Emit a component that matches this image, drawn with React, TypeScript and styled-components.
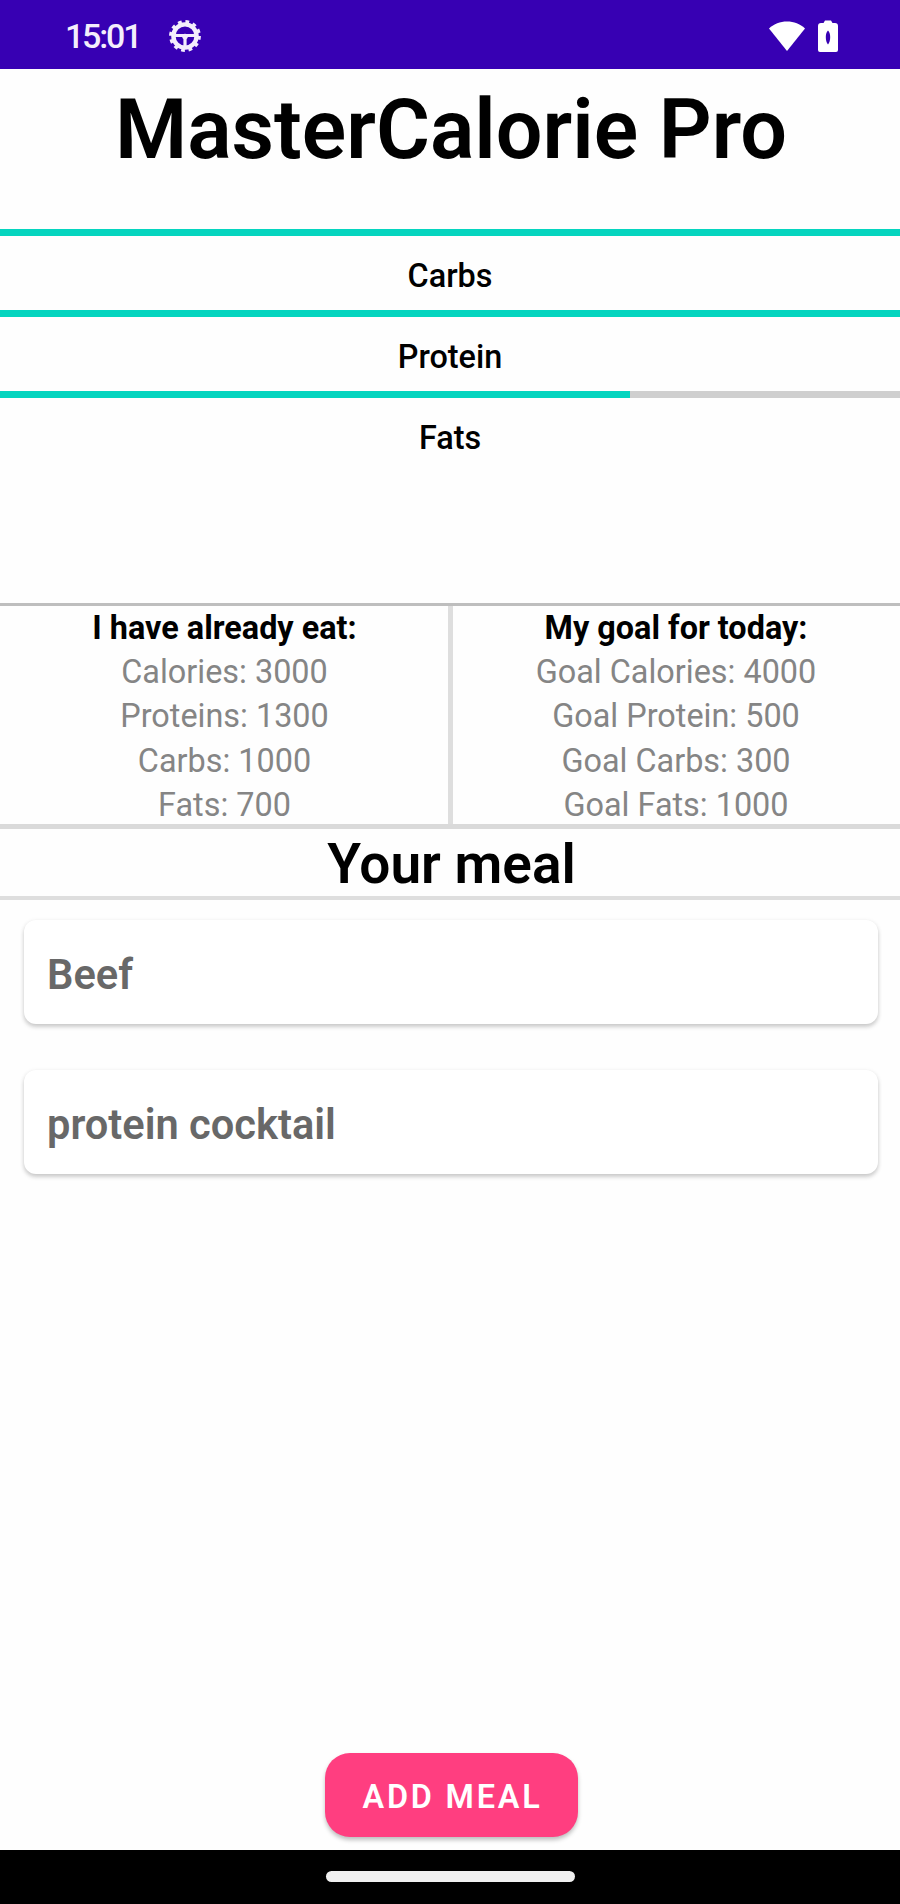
import React from 'react';
import styled, { createGlobalStyle } from 'styled-components';

const GlobalStyle = createGlobalStyle`
  *, *::before, *::after { box-sizing: border-box; }
  body { margin: 0; background: #fff; font-family: Roboto, sans-serif; color: #000; }
`;

const Screen = styled.div`
  display: flex;
  flex-direction: column;
  width: 900px;
  height: 1904px;
  overflow: hidden;
  background: #fefefe;
`;

const StatusBar = styled.header`
  flex: none;
  display: flex;
  align-items: center;
  justify-content: space-between;
  height: 69px;
  padding: 3px 62px 0 65px;
  background: #3700b3;
  color: #fff;
`;

const StatusGroup = styled.div<{ $gap: number }>`
  display: flex;
  align-items: center;
  gap: ${(p) => p.$gap}px;
`;

const Clock = styled.time`
  font-size: 34px;
  line-height: 40px;
  font-weight: 500;
  letter-spacing: -2.2px;
  color: #f4eefc;
`;

const Title = styled.h1`
  flex: none;
  margin: 0;
  padding: 12px 0 0 2px;
  height: 159px;
  font-size: 82.6px;
  line-height: 97px;
  font-weight: 600;
  text-align: center;
`;

const Macros = styled.section`
  flex: none;
  height: 375px;
  padding-top: 0.5px;
`;

const Track = styled.div`
  height: 7.6px;
  background: #cfcfcf;
`;

const Fill = styled.div`
  height: 100%;
  background: #05d5bf;
`;

const MacroLabel = styled.div`
  height: 73.6px;
  padding-top: 6px;
  font-size: 32.4px;
  line-height: 68px;
  font-weight: 500;
  text-align: center;
`;

const Summary = styled.section`
  flex: none;
  display: grid;
  grid-template-columns: 448px 5px 447px;
  height: 226px;
  border-top: 3px solid #bebebe;
  border-bottom: 5px solid #dadada;
`;

const Divider = styled.div`
  background: #dedede;
`;

const Column = styled.div<{ $side: 'left' | 'right' }>`
  height: 218px;
  padding-${(p) => p.$side}: 1px;
  text-align: center;
  font-size: 32.4px;
  line-height: 44.2px;
`;

const ColumnTitle = styled.div`
  font-weight: 700;
`;

const Stat = styled.div`
  color: #858585;
`;

const SectionTitle = styled.h2`
  flex: none;
  margin: 0;
  height: 71px;
  padding: 2px 0 0 3px;
  border-bottom: 4px solid #dedede;
  font-size: 55px;
  line-height: 67px;
  font-weight: 600;
  text-align: center;
`;

const MealList = styled.main`
  flex: 1;
  display: flex;
  flex-direction: column;
  gap: 46px;
  padding: 20px 22px 0 24px;
`;

const MealCard = styled.article`
  display: flex;
  align-items: center;
  height: 104px;
  padding: 5px 23px 0;
  border-radius: 12px;
  background: #fff;
  box-shadow: 0 3px 4px rgba(0, 0, 0, 0.17), 0 1px 5px rgba(0, 0, 0, 0.08);
  font-size: 41.6px;
  font-weight: 600;
  color: #686868;
`;

const Actions = styled.div`
  flex: none;
  display: flex;
  justify-content: center;
  height: 97px;
  padding-left: 2px;
`;

const AddButton = styled.button`
  width: 253px;
  height: 84px;
  padding: 3px 0 0 3px;
  border: 0;
  border-radius: 25px;
  background: #ff3e80;
  color: #fff;
  font-family: inherit;
  font-size: 32.4px;
  font-weight: 600;
  letter-spacing: 2.8px;
  box-shadow: 0 3px 4px rgba(0, 0, 0, 0.25);
`;

const NavBar = styled.footer`
  flex: none;
  display: flex;
  justify-content: center;
  height: 54px;
  padding: 21px 0 0 1px;
  background: #000;
`;

const HomeHandle = styled.div`
  width: 249px;
  height: 11px;
  border-radius: 6px;
  background: #f0f0f0;
`;

const WheelIcon = () => (
  <svg width="34" height="34" viewBox="0 0 34 34" fill="none" stroke="#f4eefc">
    <circle cx="17" cy="17" r="11.6" strokeWidth="4.4" />
    <circle cx="17" cy="17" r="14.4" strokeWidth="3" strokeDasharray="3.77 3.77" />
    <path d="M6 16.5h22M17 17v11" strokeWidth="3.2" />
    <circle cx="17" cy="17.5" r="2.8" fill="#f4eefc" stroke="none" />
  </svg>
);

const WifiIcon = () => (
  <svg width="36" height="30" viewBox="0 0 36 30" fill="currentColor">
    <path d="M0 7.5C5 2.8 11 .5 18 .5S31 2.8 36 7.5L18 30Z" />
  </svg>
);

const BatteryIcon = () => (
  <svg width="20" height="32" viewBox="0 0 20 32" fill="currentColor">
    <path
      fillRule="evenodd"
      d="M5.5 3L7 .5h6L14.500 3H17a3 3 0 0 1 3 3v24a2 2 0 0 1-2 2H2a2 2 0 0 1-2-2V6a3 3 0 0 1 3-3ZM10 10.500C8.500 12 7.800 14 7.800 17S8.500 22.500 10 24.500C11.500 22.500 12.200 20 12.200 17S11.500 12 10 10.500Z"
    />
  </svg>
);

const macros = [
  { name: 'Carbs', percent: 100 },
  { name: 'Protein', percent: 100 },
  { name: 'Fats', percent: 70 },
];
const eaten = ['Calories: 3000', 'Proteins: 1300', 'Carbs: 1000', 'Fats: 700'];
const goals = ['Goal Calories: 4000', 'Goal Protein: 500', 'Goal Carbs: 300', 'Goal Fats: 1000'];
const meals = ['Beef', 'protein cocktail'];

export default function App() {
  return (
    <Screen>
      <GlobalStyle />
      <StatusBar>
        <StatusGroup $gap={28}>
          <Clock>15:01</Clock>
          <WheelIcon />
        </StatusGroup>
        <StatusGroup $gap={13}>
          <WifiIcon />
          <BatteryIcon />
        </StatusGroup>
      </StatusBar>
      <Title>MasterCalorie Pro</Title>
      <Macros>
        {macros.map((m) => (
          <React.Fragment key={m.name}>
            <Track>
              <Fill style={{ width: `${m.percent}%` }} />
            </Track>
            <MacroLabel>{m.name}</MacroLabel>
          </React.Fragment>
        ))}
      </Macros>
      <Summary>
        <Column $side="left">
          <ColumnTitle>I have already eat:</ColumnTitle>
          {eaten.map((s) => (
            <Stat key={s}>{s}</Stat>
          ))}
        </Column>
        <Divider />
        <Column $side="right">
          <ColumnTitle>My goal for today:</ColumnTitle>
          {goals.map((s) => (
            <Stat key={s}>{s}</Stat>
          ))}
        </Column>
      </Summary>
      <SectionTitle>Your meal</SectionTitle>
      <MealList>
        {meals.map((m) => (
          <MealCard key={m}>{m}</MealCard>
        ))}
      </MealList>
      <Actions>
        <AddButton>ADD MEAL</AddButton>
      </Actions>
      <NavBar>
        <HomeHandle />
      </NavBar>
    </Screen>
  );
}
